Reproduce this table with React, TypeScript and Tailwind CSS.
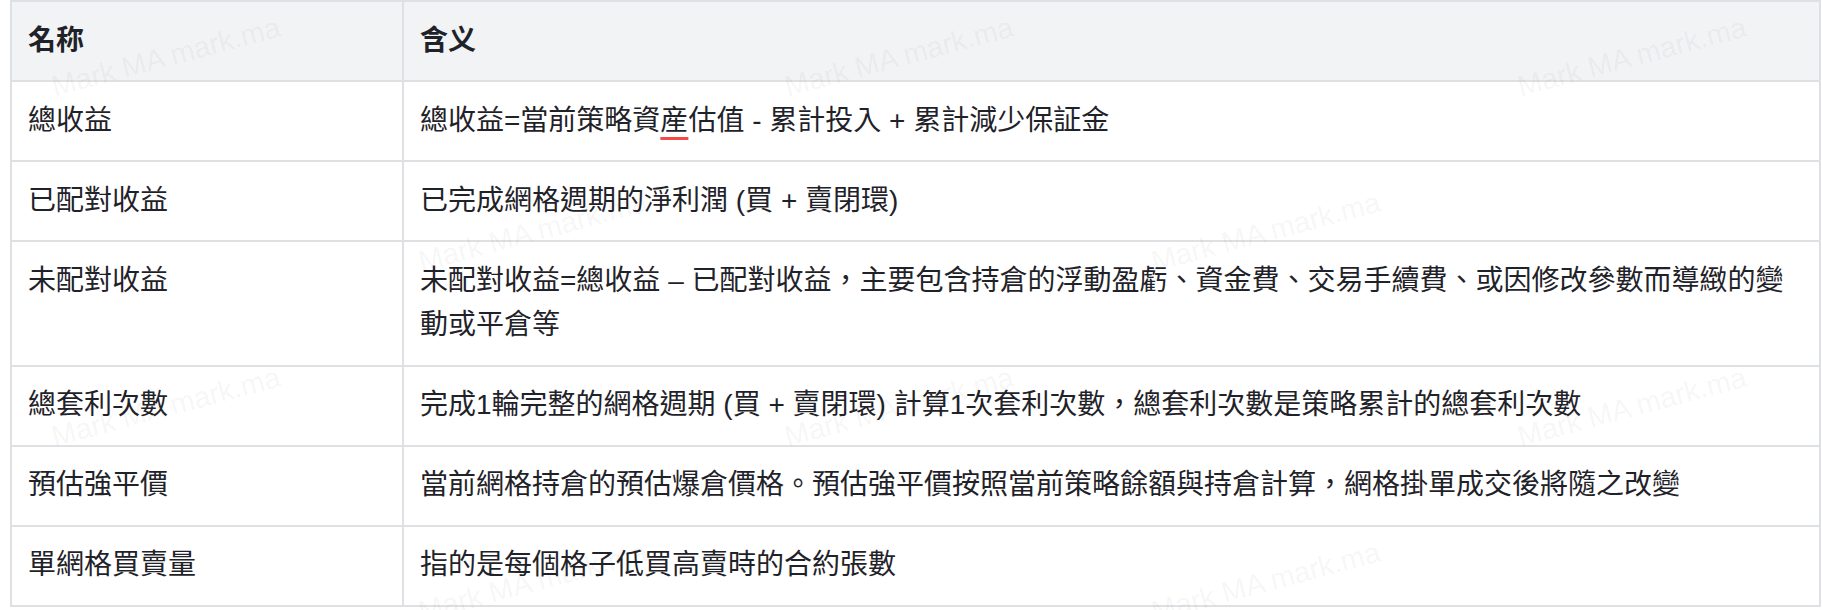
import React from "react";

const cellBase =
  "border-2 border-[#dee0e3] px-4 py-[16.6px] text-left align-top";

const rows: [string, React.ReactNode][] = [
  [
    "總收益",
    <>
      總收益=當前策略資
      <span className="underline decoration-[#f54a45] decoration-[3px] underline-offset-[7px]">
        産
      </span>
      估值 - 累計投入 + 累計減少保証金
    </>,
  ],
  ["已配對收益", "已完成網格週期的淨利潤 (買 + 賣閉環)"],
  [
    "未配對收益",
    "未配對收益=總收益 – 已配對收益，主要包含持倉的浮動盈虧、資金費、交易手續費、或因修改參數而導緻的變動或平倉等",
  ],
  [
    "總套利次數",
    "完成1輪完整的網格週期 (買 + 賣閉環) 計算1次套利次數，總套利次數是策略累計的總套利次數",
  ],
  [
    "預估強平價",
    "當前網格持倉的預估爆倉價格。預估強平價按照當前策略餘額與持倉計算，網格掛單成交後將隨之改變",
  ],
  ["單網格買賣量", "指的是每個格子低買高賣時的合約張數"],
];

const marks = [
  "left-[166px] top-[57px]",
  "left-[899px] top-[57px]",
  "left-[1632px] top-[57px]",
  "left-[533px] top-[232px]",
  "left-[1266px] top-[232px]",
  "left-[166px] top-[407px]",
  "left-[899px] top-[407px]",
  "left-[1632px] top-[407px]",
  "left-[533px] top-[582px]",
  "left-[1266px] top-[582px]",
];

export default function App() {
  return (
    <div className="relative h-[610px] w-[1822px] overflow-hidden bg-white pl-[10px] font-['Liberation_Sans','Noto_Sans_CJK_TC',sans-serif] text-[28px] leading-[1.6] text-[#1f2329]">
      <table className="w-[1811px] table-fixed border-collapse border-2 border-[#dee0e3]">
        <thead>
          <tr className="bg-[#f2f3f5]">
            <th className={`${cellBase} w-[392px] font-semibold`}>名称</th>
            <th className={`${cellBase} font-semibold`}>含义</th>
          </tr>
        </thead>
        <tbody>
          {rows.map(([name, desc], i) => (
            <tr key={i} className="bg-white">
              <td className={cellBase}>{name}</td>
              <td className={cellBase}>{desc}</td>
            </tr>
          ))}
        </tbody>
      </table>
      <div className="pointer-events-none absolute inset-0">
        {marks.map((pos, i) => (
          <span
            key={i}
            className={`absolute ${pos} -translate-x-1/2 -translate-y-1/2 -rotate-[15deg] whitespace-nowrap font-['Liberation_Sans',sans-serif] text-[29px] leading-none text-[rgba(0,0,0,0.055)]`}
          >
            Mark MA mark.ma
          </span>
        ))}
      </div>
    </div>
  );
}
